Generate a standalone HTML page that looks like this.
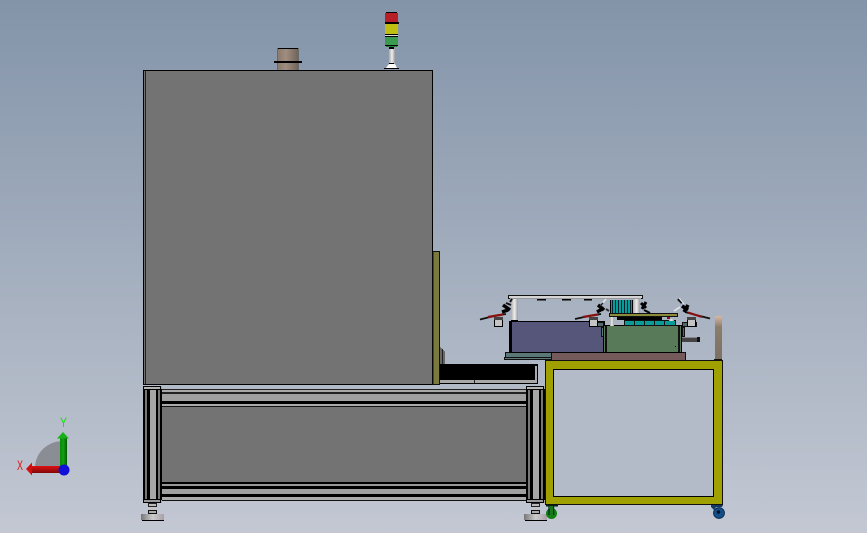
<!DOCTYPE html>
<html><head><meta charset="utf-8"><style>
html,body{margin:0;padding:0;width:867px;height:533px;overflow:hidden}
svg{display:block}
text{font-family:"Liberation Sans",sans-serif}
</style></head><body>
<svg width="867" height="533" viewBox="0 0 867 533" xmlns="http://www.w3.org/2000/svg" shape-rendering="crispEdges">
<defs>
<linearGradient id="bg" x1="0" y1="0" x2="0" y2="1"><stop offset="0" stop-color="#8394a9"/><stop offset="1" stop-color="#c3c8d3"/></linearGradient>
<linearGradient id="ch" x1="0" y1="0" x2="1" y2="0"><stop offset="0" stop-color="#8a7a6c"/><stop offset=".4" stop-color="#a08e80"/><stop offset="1" stop-color="#6e6258"/></linearGradient>
<linearGradient id="col" x1="0" y1="0" x2="1" y2="0"><stop offset="0" stop-color="#aaa"/><stop offset=".5" stop-color="#eee"/><stop offset="1" stop-color="#999"/></linearGradient>
<linearGradient id="rod" x1="0" y1="0" x2="0" y2="1"><stop offset="0" stop-color="#d8b8a0"/><stop offset=".25" stop-color="#8c7c6c"/><stop offset="1" stop-color="#7c7060"/></linearGradient>
<linearGradient id="foot" x1="0" y1="0" x2="1" y2="0"><stop offset="0" stop-color="#777"/><stop offset=".5" stop-color="#ccc"/><stop offset="1" stop-color="#a8a0a8"/></linearGradient>
<linearGradient id="gy" x1="0" y1="0" x2="1" y2="0"><stop offset="0" stop-color="#0a8a0a"/><stop offset=".5" stop-color="#10a010"/><stop offset="1" stop-color="#045a04"/></linearGradient>
<linearGradient id="rx" x1="0" y1="0" x2="0" y2="1"><stop offset="0" stop-color="#e01010"/><stop offset="1" stop-color="#800808"/></linearGradient>
<g id="post">
<rect x="0" y="0" width="19" height="117" fill="#a6a6a6"/>
<rect x="2" y="3" width="2" height="111" fill="#777"/>
<rect x="15" y="3" width="2" height="111" fill="#777"/>
<rect x="0" y="3" width="2" height="111" fill="#000"/>
<rect x="4" y="3" width="3" height="111" fill="#000"/>
<rect x="13" y="3" width="2" height="111" fill="#000"/>
<rect x="17" y="3" width="2" height="111" fill="#000"/>
<rect x="0.5" y="0.5" width="17" height="3" fill="#b4b4b4" stroke="#000" stroke-width="1"/>
<rect x="0.5" y="113.5" width="17" height="3" fill="#999" stroke="#000" stroke-width="1"/>
<rect x="5.5" y="117.5" width="8" height="3" fill="#bbb" stroke="#222" stroke-width="1"/>
<rect x="7" y="121" width="5" height="4" fill="#c4c4c4"/>
<rect x="5.5" y="124.5" width="8" height="3" fill="#aaa" stroke="#111" stroke-width="1"/>
<rect x="-2" y="128" width="23" height="6" fill="url(#foot)"/>
<rect x="-1" y="134" width="22" height="1" fill="#000"/>
</g>
<g id="clamp">
<rect x="0.5" y="0.5" width="8" height="9" fill="#c4c4c4" stroke="#000" stroke-width="1"/>
<rect x="0" y="0" width="9" height="3" fill="#444"/>
</g>
</defs>
<rect width="867" height="533" fill="url(#bg)"/>

<!-- chimney -->
<rect x="277.5" y="48.5" width="21" height="22" fill="url(#ch)" stroke="#6a6a6a" stroke-width="1"/>
<rect x="278" y="48" width="20" height="1" fill="#000"/>
<rect x="274" y="61" width="28" height="2" fill="#000"/>

<!-- stack light -->
<rect x="386" y="12" width="11" height="2" fill="#000"/>
<rect x="385" y="13" width="13" height="9" fill="#b81e26"/>
<rect x="385" y="22" width="14" height="2" fill="#000"/>
<rect x="385" y="24" width="13" height="10" fill="#bfbf12"/>
<rect x="385" y="34" width="13" height="1" fill="#000"/>
<rect x="385" y="35" width="13" height="1" fill="#ddd"/>
<rect x="385" y="36" width="13" height="1" fill="#000"/>
<rect x="385" y="37" width="13" height="8" fill="#3c9a50"/>
<rect x="385" y="45" width="13" height="1" fill="#000"/>
<rect x="386" y="46" width="11" height="1" fill="#2a7a3c"/>
<rect x="389" y="47" width="5" height="2" fill="#000"/>
<rect x="389" y="49" width="6" height="16" fill="url(#col)"/>
<rect x="389" y="63" width="5" height="1" fill="#000"/>
<polygon points="389,64 395,64 397,68 386,68" fill="#fff"/>
<rect x="384" y="68" width="15" height="1" fill="#000"/>

<!-- main cabinet -->
<rect x="143.5" y="70.5" width="289" height="314" fill="#737373" stroke="#000" stroke-width="1"/>
<rect x="145" y="71" width="1" height="313" fill="#222"/>

<!-- olive panel -->
<rect x="433" y="251.5" width="6.5" height="133" fill="#7a7a3e" stroke="#111" stroke-width="1"/>
<polygon points="440,347 445,352 445,365 440,365" fill="#666"/>
<rect x="442" y="349" width="1" height="15" fill="#222"/>

<!-- conveyor -->
<rect x="440" y="364" width="98" height="20" fill="#000"/>
<rect x="440" y="380" width="95" height="3" fill="#a8a8a8"/>
<rect x="535" y="366" width="2" height="17" fill="#a8a8a8"/>
<rect x="474" y="380" width="1" height="3" fill="#222"/>

<!-- base frame -->
<rect x="160" y="389" width="368" height="1" fill="#222"/>
<rect x="160" y="390" width="368" height="2" fill="#a8a8a8"/>
<rect x="160" y="392" width="368" height="2" fill="#222"/>
<rect x="160" y="394" width="368" height="7" fill="#a0a0a0"/>
<rect x="160" y="401" width="368" height="3" fill="#000"/>
<rect x="160" y="404" width="368" height="2" fill="#aaa"/>
<rect x="160" y="406" width="368" height="1" fill="#111"/>
<rect x="160" y="407" width="368" height="75" fill="#737373"/>
<rect x="160" y="482" width="368" height="2" fill="#000"/>
<rect x="160" y="484" width="368" height="2" fill="#999"/>
<rect x="160" y="486" width="368" height="3" fill="#000"/>
<rect x="160" y="489" width="368" height="5" fill="#a0a0a0"/>
<rect x="160" y="494" width="368" height="3" fill="#000"/>
<rect x="160" y="497" width="368" height="3" fill="#aaa"/>
<rect x="160" y="500" width="368" height="1" fill="#111"/>
<use href="#post" x="143" y="386"/>
<use href="#post" x="526" y="386"/>

<!-- yellow table -->
<rect x="545.5" y="360.5" width="177" height="144" fill="#a0a000" stroke="#111" stroke-width="1"/>
<rect x="553.5" y="369.5" width="160" height="127" fill="#b3bac8" stroke="#000" stroke-width="1"/>
<!-- casters -->
<g shape-rendering="auto">
<rect x="546" y="505" width="12" height="1.500" fill="#021"/>
<circle cx="551.5" cy="513.5" r="4.200" fill="#128012" stroke="#128012" stroke-width="2.600"/>
<path d="M549 506v9M553.500 506v9" stroke="#032" stroke-width="1.400"/>
<rect x="550" y="506" width="3" height="9" fill="#1a7a1a"/>
<path d="M711 505h12l-1 2h-6l-2 3-3-3z" fill="#123a66"/>
<circle cx="719" cy="513" r="5.400" fill="#144f8a" stroke="#0a2a50" stroke-width="1"/>
<circle cx="718.5" cy="512" r="1.800" fill="#012"/>
</g>

<!-- machine on table -->
<rect x="505.5" y="352.5" width="46" height="5" fill="#5a7878" stroke="#111" stroke-width="1"/>
<rect x="504.5" y="357.5" width="47" height="2" fill="#5a7878" stroke="#111" stroke-width="1"/>
<rect x="551.5" y="352.5" width="134" height="8" fill="#745a5a" stroke="#111" stroke-width="1"/>
<rect x="509.5" y="321.5" width="95" height="31" fill="#56567a" stroke="#000" stroke-width="1"/>
<rect x="510" y="322" width="2" height="30" fill="#000"/>
<rect x="589.5" y="322.5" width="14" height="4" fill="#506a6a" stroke="#111" stroke-width="1"/>
<rect x="601.5" y="327.5" width="2" height="9" fill="#56787a" stroke="#111" stroke-width="1"/>
<rect x="682.5" y="322.5" width="14" height="4" fill="#506a6a" stroke="#111" stroke-width="1"/>
<rect x="682.5" y="327.5" width="2" height="9" fill="#506a6a" stroke="#111" stroke-width="1"/>
<rect x="603.5" y="325.5" width="78" height="27" fill="#587a58" stroke="#000" stroke-width="1"/>
<rect x="605" y="326" width="2" height="26" fill="#111"/>
<rect x="678" y="326" width="2" height="26" fill="#111"/>
<rect x="675" y="346" width="1" height="1" fill="#000"/>
<rect x="682" y="337" width="18" height="5" fill="#444"/>
<rect x="682" y="337" width="18" height="1" fill="#888"/>
<rect x="697" y="337" width="3" height="5" fill="#111"/>
<rect x="624.5" y="320.5" width="51" height="5" fill="#0a9a98" stroke="#111" stroke-width="1"/>
<path d="M634.500 320v5M644.500 320v5M654.500 320v5M664.500 320v5" stroke="#111" stroke-width="1"/>
<rect x="610" y="300" width="23" height="13" fill="#0a9a98"/>
<path d="M612.500 300v13M615.500 300v13M618.500 300v13M621.500 300v13M624.500 300v13M627.500 300v13M630.500 300v13" stroke="#023" stroke-width="1"/>
<rect x="610" y="300" width="1" height="13" fill="#000"/>
<rect x="632" y="300" width="1" height="13" fill="#000"/>
<rect x="609.5" y="313.5" width="68" height="3" fill="#8a8a3a" stroke="#111" stroke-width="1"/>
<rect x="617" y="317" width="45" height="3" fill="#000"/>
<rect x="667" y="317" width="3" height="2" fill="#8a1010"/>
<rect x="610" y="317" width="4" height="9" fill="url(#col)"/>
<rect x="669" y="319" width="5" height="2" fill="url(#col)"/>
<rect x="511" y="299" width="7" height="22" fill="url(#col)"/>
<rect x="511" y="320" width="7" height="1" fill="#000"/>
<rect x="633" y="299" width="7" height="14" fill="url(#col)"/>
<rect x="508.5" y="295.5" width="134" height="3" fill="#d4d4d4" stroke="#111" stroke-width="1"/>
<rect x="510" y="298" width="131" height="1" fill="#999"/>
<path d="M537 299.500h9M562 299.500h9M584 299.500h8" stroke="#000" stroke-width="1.500"/>

<!-- clamps -->
<use href="#clamp" x="494" y="317"/>
<use href="#clamp" x="589" y="317"/>
<use href="#clamp" x="687" y="317"/>
<g shape-rendering="auto">
<path d="M480 319.500 L496 315.500 L506 314" stroke="#111" stroke-width="1.800" fill="none"/>
<path d="M488 317 L503 314.500" stroke="#8a1010" stroke-width="2.200" fill="none"/>
<path d="M502 312 L508 310 M503 305 L510 310" stroke="#000" stroke-width="3.500" fill="none"/>
<path d="M506 303 L511 305 M510 302 L512 299" stroke="#111" stroke-width="2" fill="none"/>
<path d="M575 319 L591 315.500 L601 314" stroke="#111" stroke-width="1.800" fill="none"/>
<path d="M583 317 L598 314.500" stroke="#8a1010" stroke-width="2.200" fill="none"/>
<path d="M597 312 L604 308 M598 305 L604 310" stroke="#000" stroke-width="3.500" fill="none"/>
<path d="M601 305 L606 299" stroke="#e8e8e8" stroke-width="1.500" fill="none"/>
<path d="M600 306 L603 303" stroke="#222" stroke-width="1.500" fill="none"/>
<path d="M606 309 L609 311" stroke="#333" stroke-width="2" fill="none"/>
<path d="M710 318.500 L694 314.500 L685 312" stroke="#111" stroke-width="1.800" fill="none"/>
<path d="M702 317 L688 312.500" stroke="#8a1010" stroke-width="2.200" fill="none"/>
<path d="M682 306 L688 310 M688 305 L684 312" stroke="#000" stroke-width="3.500" fill="none"/>
<path d="M678 299 L682 303" stroke="#111" stroke-width="2.500" fill="none"/>
<path d="M679 298 L684 304" stroke="#e8e8e8" stroke-width="1" fill="none"/>
<path d="M674 311 L680 307" stroke="#e8e8e8" stroke-width="1.500" fill="none"/>
<path d="M641 303 L646 308 M646 302 L642 309" stroke="#000" stroke-width="3" fill="none"/>
<path d="M644 310 L650 313" stroke="#000" stroke-width="2" fill="none"/>
</g>

<!-- rod -->
<rect x="715" y="316" width="7" height="44" fill="url(#rod)"/>
<rect x="714" y="359" width="8" height="1" fill="#111"/>

<!-- triad -->
<g shape-rendering="auto">
<path d="M35 466 A28 27 0 0 1 62 441 L62 466 Z" fill="#8a8d94"/>
<rect x="60" y="438" width="7" height="28" fill="url(#gy)"/>
<polygon points="57,438.500 63,432 69,438.500" fill="#18b018"/>
<rect x="31" y="466" width="32" height="7" fill="url(#rx)"/>
<polygon points="32,462.500 26,469 32,475.500" fill="#d01010"/>
<circle cx="64" cy="470" r="5.500" fill="#1010d8"/>
<text x="60" y="427" font-size="14" fill="#10e010" textLength="7" lengthAdjust="spacingAndGlyphs">Y</text>
<text x="17" y="470" font-size="14" fill="#e01010" textLength="6" lengthAdjust="spacingAndGlyphs">X</text>
</g>
</svg>
</body></html>
